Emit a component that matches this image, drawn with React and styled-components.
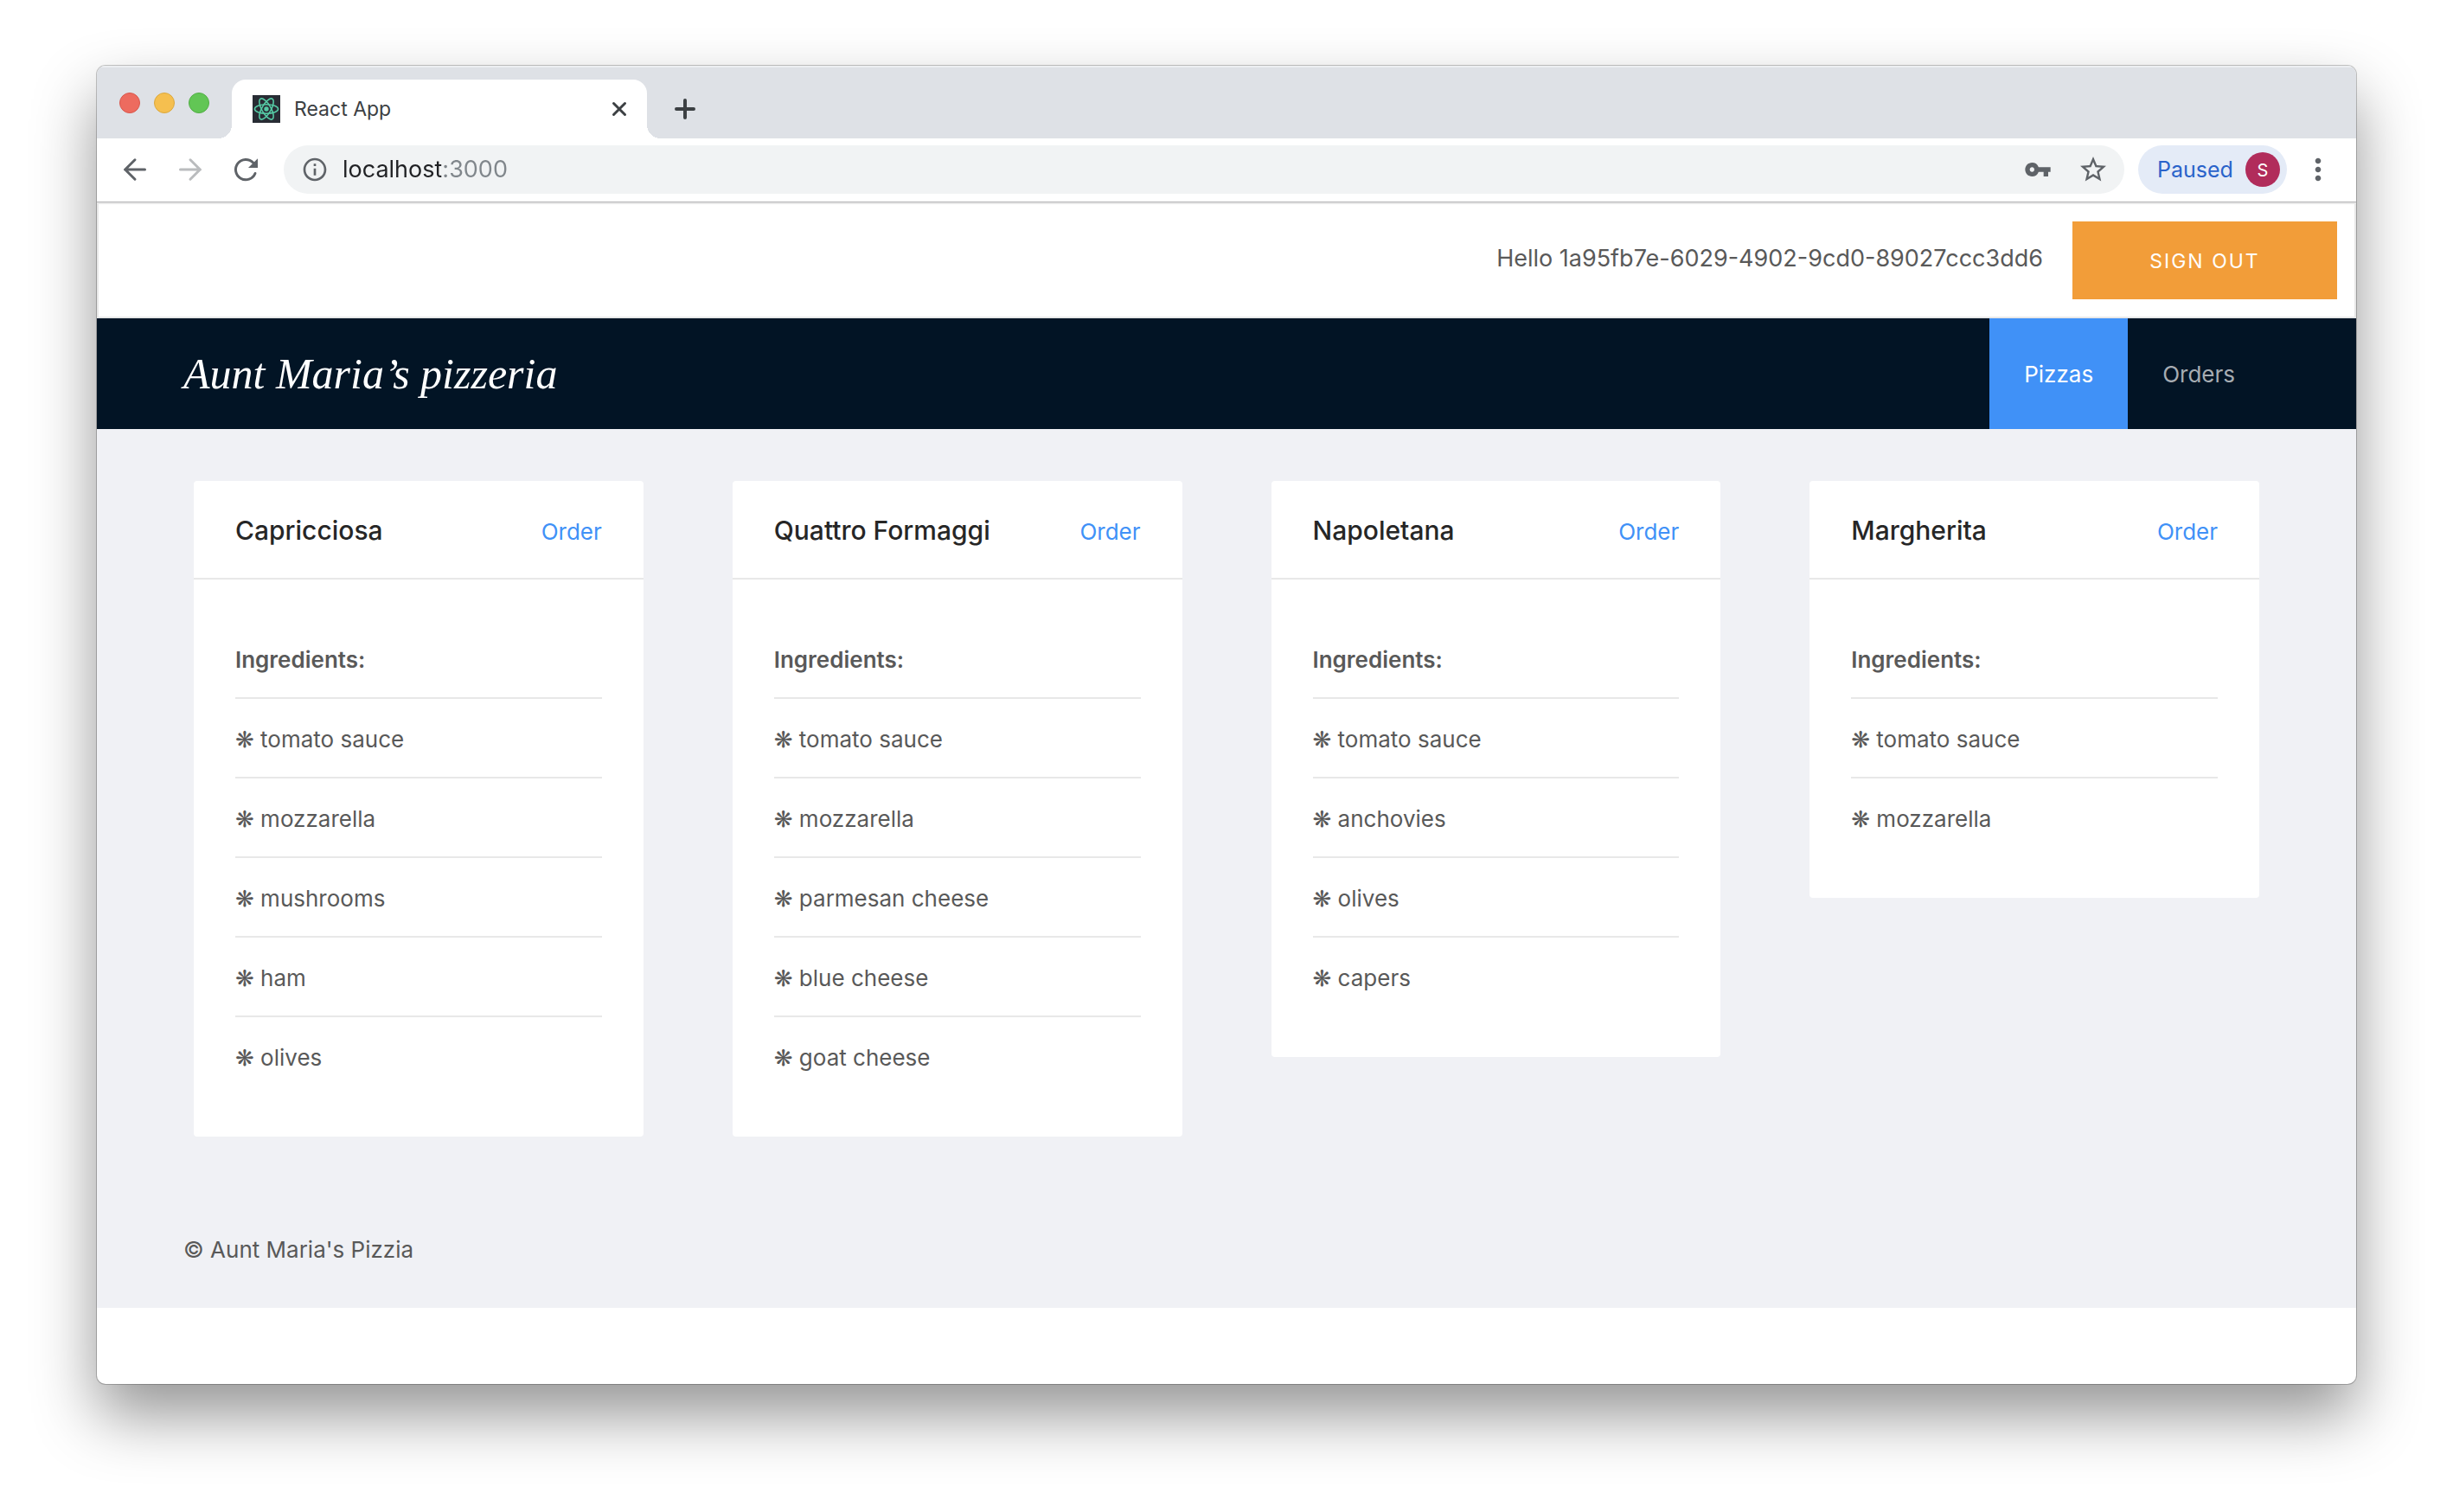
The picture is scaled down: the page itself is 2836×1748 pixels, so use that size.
import React from "react";
import styled, { createGlobalStyle } from "styled-components";
import { MdInfoOutline, MdVpnKey, MdStarBorder, MdMoreVert } from "react-icons/md";

const GlobalStyle = createGlobalStyle`
  *, *::before, *::after { box-sizing: border-box; }
  body {
    margin: 0;
    background: #ffffff;
    color: #595959;
    font-family: Inter, "Liberation Sans", "DejaVu Sans", sans-serif;
    font-size: 26px;
    line-height: 42px;
  }
  button, input { font: inherit; color: inherit; border: 0; padding: 0; margin: 0; background: none; }
  a { text-decoration: none; color: inherit; }
  svg { display: block; }
`;

const Desktop = styled.div`
  display: flex;
  min-height: 100vh;
  padding: 76px 112px 148px;
`;

const Window = styled.div`
  flex: 1;
  min-width: 0;
  display: flex;
  flex-direction: column;
  overflow: hidden;
  border-radius: 10px;
  background: #ffffff;
  box-shadow: 0 0 0 1px rgba(0, 0, 0, 0.22), 0 36px 72px rgba(0, 0, 0, 0.42);
`;

const TabStrip = styled.div`
  display: flex;
  align-items: flex-end;
  height: 84px;
  padding-left: 26px;
  background: #dee1e6;
  box-shadow: inset 0 2px 0 #eceef1;
`;

const Lights = styled.div`
  display: flex;
  gap: 16px;
  align-self: center;
  padding-top: 2px;
  margin-right: 26px;
`;

const Light = styled.button`
  width: 24px;
  height: 24px;
  border-radius: 50%;
  background: ${(p) => p.$fill};
  border: 1px solid ${(p) => p.$edge};
`;

const Tab = styled.div`
  position: relative;
  display: flex;
  align-items: center;
  width: 480px;
  height: 68px;
  padding: 0 16px 0 24px;
  border-radius: 16px 16px 0 0;
  background: #ffffff;
  color: #3c4043;

  &::before,
  &::after {
    content: "";
    position: absolute;
    bottom: 0;
    width: 16px;
    height: 16px;
  }
  &::before {
    right: 100%;
    background: radial-gradient(circle at 0 0, transparent 16px, #ffffff 16px);
  }
  &::after {
    left: 100%;
    background: radial-gradient(circle at 100% 0, transparent 16px, #ffffff 16px);
  }
`;

const TabTitle = styled.span`
  flex: 1;
  margin-left: 16px;
  font-size: 23px;
`;

const IconButton = styled.button`
  display: grid;
  place-items: center;
  flex: none;
  color: ${(p) => p.$tone || "#5f6368"};
`;

const NewTab = styled(IconButton)`
  height: 68px;
  margin-left: 32px;
`;

const Toolbar = styled.div`
  display: flex;
  align-items: center;
  gap: 16px;
  height: 74px;
  padding: 0 24px 2px;
  border-bottom: 1px solid #b3b3b4;
`;

const History = styled.div`
  display: flex;
  gap: 24px;
  margin-right: 8px;
`;

const Omnibox = styled.label`
  flex: 1;
  min-width: 0;
  display: flex;
  align-items: center;
  gap: 16px;
  height: 56px;
  padding: 0 18px 0 20px;
  border-radius: 28px;
  background: #f1f3f4;
  color: #5f6368;
`;

/* The host is drawn dark and the port grey. */
const Address = styled.input`
  flex: 1;
  min-width: 0;
  height: 42px;
  font-size: 27px;
  background: linear-gradient(90deg, #202124 114px, #80868b 114px);
  -webkit-background-clip: text;
  background-clip: text;
  color: transparent;
  outline: none;
`;

const OmniboxActions = styled.span`
  display: flex;
  align-items: center;
  gap: 30px;
`;

const Profile = styled.button`
  display: flex;
  align-items: center;
  justify-content: space-between;
  width: 172px;
  height: 56px;
  padding: 0 8px 0 22px;
  border-radius: 28px;
  background: #e4ebf7;
  color: #2a63ca;
  font-size: 25px;
`;

const Avatar = styled.span`
  display: grid;
  place-items: center;
  width: 40px;
  height: 40px;
  border-radius: 50%;
  background: #b12c5b;
  color: #ffffff;
  font-size: 20px;
`;

const UserBar = styled.header`
  display: flex;
  align-items: center;
  justify-content: flex-end;
  gap: 34px;
  padding: 20px;
  border: 2px solid #e8e8e8;
`;

const Greeting = styled.span`
  padding-bottom: 4px;
  font-size: 27px;
`;

const SignOut = styled.button`
  min-width: 306px;
  height: 90px;
  padding-top: 2px;
  background: #f29d39;
  color: #ffffff;
  font-size: 23px;
  letter-spacing: 2px;
  text-transform: uppercase;
`;

const NavBar = styled.div`
  display: flex;
  align-items: center;
  justify-content: space-between;
  height: 128px;
  padding: 0 100px;
  background: #021425;
`;

const Brand = styled.h1`
  margin: 0;
  color: #ffffff;
  font-family: "Apple Chancery", "URW Chancery L", Z003, "Liberation Serif", serif;
  font-size: 50px;
  font-style: italic;
  font-weight: 400;
  line-height: 64px;
`;

const Menu = styled.nav`
  display: flex;
`;

const MenuLink = styled.a`
  height: 128px;
  padding: 2px 40px 0;
  line-height: 126px;
  background: ${(p) => (p.$active ? "#4091f7" : "transparent")};
  color: ${(p) => (p.$active ? "#ffffff" : "#a6acb2")};
`;

const Layout = styled.div`
  background: #f0f1f5;
`;

const Cards = styled.main`
  display: grid;
  grid-template-columns: repeat(4, 1fr);
  align-items: start;
  gap: 103px;
  padding: 60px 112px;
`;

const Card = styled.article`
  border-radius: 4px;
  background: #ffffff;
`;

const CardHead = styled.div`
  display: flex;
  align-items: baseline;
  justify-content: space-between;
  height: 114px;
  padding: 36px 48px 0;
  border-bottom: 2px solid #e8e8e8;
`;

const CardTitle = styled.h2`
  margin: 0;
  color: #262626;
  font-size: 30px;
  font-weight: 500;
  line-height: 42px;
`;

const OrderLink = styled.a`
  color: #4091f7;
`;

const Ingredients = styled.ul`
  margin: 0;
  padding: 46px 48px 48px;
  list-style: none;
`;

const Item = styled.li`
  padding: 26px 0 22px;
  border-bottom: 2px solid #e8e8e8;
  font-weight: ${(p) => (p.$heading ? 600 : 400)};
  &:last-child {
    border-bottom: 0;
  }
`;

const Footer = styled.footer`
  padding: 50px 100px 46px;
`;

const pizzas = [
  { name: "Capricciosa", ingredients: ["tomato sauce", "mozzarella", "mushrooms", "ham", "olives"] },
  { name: "Quattro Formaggi", ingredients: ["tomato sauce", "mozzarella", "parmesan cheese", "blue cheese", "goat cheese"] },
  { name: "Napoletana", ingredients: ["tomato sauce", "anchovies", "olives", "capers"] },
  { name: "Margherita", ingredients: ["tomato sauce", "mozzarella"] },
];

const lights = [
  { label: "Close window", fill: "#ed6b5f", edge: "#d9574c" },
  { label: "Minimize window", fill: "#f5bf4f", edge: "#dba83d" },
  { label: "Zoom window", fill: "#62c655", edge: "#52ae45" },
];

const strokeProps = {
  fill: "none",
  stroke: "currentColor",
  strokeWidth: 3,
  strokeLinecap: "round",
  strokeLinejoin: "round",
};

function BackIcon() {
  return (
    <svg width="40" height="40" viewBox="0 0 40 40" {...strokeProps}>
      <path d="M31.5 20h-23M20 8.8L8.7 20 20 31.2" />
    </svg>
  );
}

function ForwardIcon() {
  return (
    <svg width="40" height="40" viewBox="0 0 40 40" {...strokeProps}>
      <path d="M8.5 20h23M20 8.8L31.3 20 20 31.2" />
    </svg>
  );
}

function ReloadIcon() {
  return (
    <svg width="40" height="40" viewBox="0 0 40 40" {...strokeProps}>
      <path d="M28.6 12A11.7 11.7 0 1 0 31 24.5" />
      <path d="M34 7.2V18H23z" fill="currentColor" stroke="none" />
    </svg>
  );
}

function ReactFavicon() {
  return (
    <svg width="32" height="32" viewBox="0 0 32 32" aria-hidden="true">
      <rect width="32" height="32" fill="#282c34" />
      <g fill="none" stroke="#55c9a4" strokeWidth="1.6">
        <ellipse cx="16" cy="16" rx="13.6" ry="5.2" />
        <ellipse cx="16" cy="16" rx="13.6" ry="5.2" transform="rotate(60 16 16)" />
        <ellipse cx="16" cy="16" rx="13.6" ry="5.2" transform="rotate(120 16 16)" />
      </g>
      <circle cx="16" cy="16" r="2.7" fill="#55c9a4" />
    </svg>
  );
}

function PizzaCard({ pizza }) {
  return (
    <Card>
      <CardHead>
        <CardTitle>{pizza.name}</CardTitle>
        <OrderLink href="#order">Order</OrderLink>
      </CardHead>
      <Ingredients>
        <Item $heading>Ingredients:</Item>
        {pizza.ingredients.map((name) => (
          <Item key={name}>❋ {name}</Item>
        ))}
      </Ingredients>
    </Card>
  );
}

export default function App() {
  return (
    <>
      <GlobalStyle />
      <Desktop>
        <Window>
          <TabStrip>
            <Lights>
              {lights.map((l) => (
                <Light key={l.label} aria-label={l.label} $fill={l.fill} $edge={l.edge} />
              ))}
            </Lights>
            <Tab>
              <ReactFavicon />
              <TabTitle>React App</TabTitle>
              <IconButton aria-label="Close tab" $tone="#3c4043">
                <svg width="32" height="32" viewBox="0 0 32 32" {...strokeProps}>
                  <path d="M9.5 9.5l13 13M22.5 9.5l-13 13" />
                </svg>
              </IconButton>
            </Tab>
            <NewTab aria-label="New tab" $tone="#3c4043">
              <svg width="24" height="24" viewBox="0 0 24 24" {...strokeProps} strokeWidth={4}>
                <path d="M12 2v20M2 12h20" />
              </svg>
            </NewTab>
          </TabStrip>
          <Toolbar>
            <History>
              <IconButton aria-label="Back"><BackIcon /></IconButton>
              <IconButton aria-label="Forward" $tone="#babcbe"><ForwardIcon /></IconButton>
              <IconButton aria-label="Reload"><ReloadIcon /></IconButton>
            </History>
            <Omnibox>
              <MdInfoOutline size={32} />
              <Address type="text" aria-label="Address" defaultValue="localhost:3000" />
              <OmniboxActions>
                <MdVpnKey size={32} />
                <MdStarBorder size={36} />
              </OmniboxActions>
            </Omnibox>
            <Profile>
              Paused
              <Avatar>S</Avatar>
            </Profile>
            <IconButton aria-label="Browser menu"><MdMoreVert size={40} /></IconButton>
          </Toolbar>
          <UserBar>
            <Greeting>Hello 1a95fb7e-6029-4902-9cd0-89027ccc3dd6</Greeting>
            <SignOut>Sign out</SignOut>
          </UserBar>
          <NavBar>
            <Brand>Aunt Maria’s pizzeria</Brand>
            <Menu>
              <MenuLink href="#pizzas" $active>Pizzas</MenuLink>
              <MenuLink href="#orders">Orders</MenuLink>
            </Menu>
          </NavBar>
          <Layout>
            <Cards>
              {pizzas.map((pizza) => (
                <PizzaCard key={pizza.name} pizza={pizza} />
              ))}
            </Cards>
            <Footer>© Aunt Maria's Pizzia</Footer>
          </Layout>
        </Window>
      </Desktop>
    </>
  );
}
